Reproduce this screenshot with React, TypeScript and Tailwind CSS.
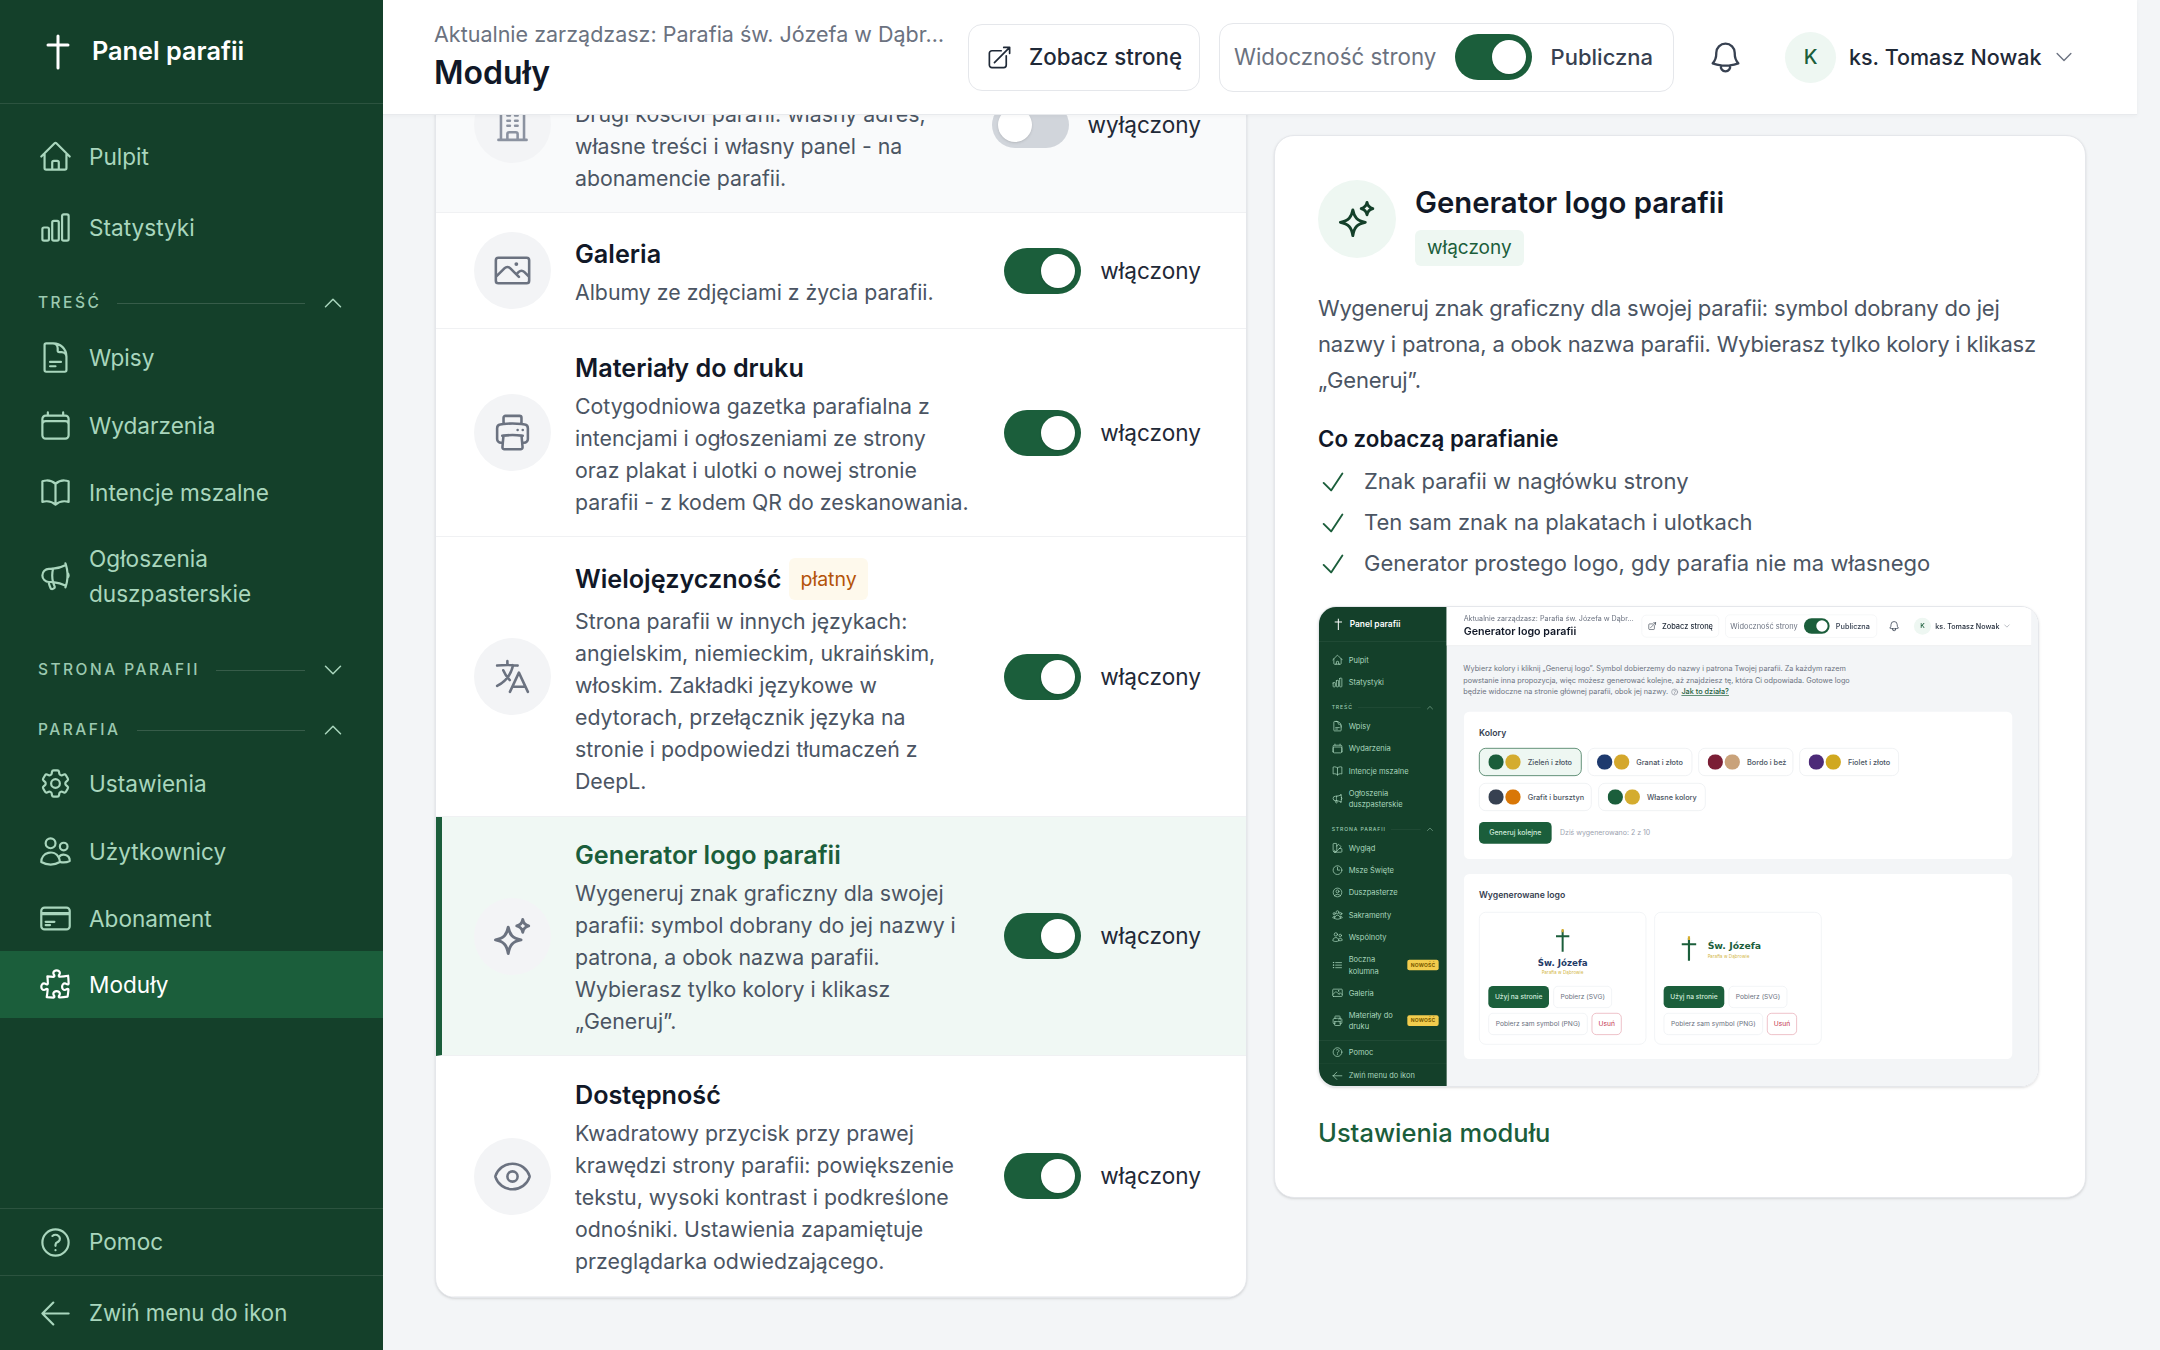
import React from 'react';
import {
  HiOutlineHome, HiOutlineChartBar, HiOutlineDocumentText, HiOutlineCalendar, HiOutlineBookOpen,
  HiOutlineMegaphone, HiOutlineCog6Tooth, HiOutlineUsers, HiOutlineCreditCard, HiOutlinePuzzlePiece,
  HiOutlineQuestionMarkCircle, HiOutlineArrowLeft, HiOutlineBell, HiOutlineArrowTopRightOnSquare,
  HiOutlineChevronDown, HiOutlineChevronUp, HiOutlineLanguage, HiOutlineEye, HiOutlinePhoto,
  HiOutlinePrinter, HiOutlineBuildingOffice, HiOutlineCheck, HiOutlineSwatch, HiOutlineClock,
  HiOutlineUserCircle, HiOutlineListBullet, HiOutlineUserGroup,
} from 'react-icons/hi2';

type IC = React.ComponentType<{ className?: string }>;

function Sparkle({ className }: { className?: string }) {
  return (
    <svg viewBox="0 0 24 24" fill="none" stroke="currentColor" strokeWidth="1.7" strokeLinejoin="round" className={className}>
      <path d="M9.5 6.5C10.3 11 12 13 17 14C12 15 10.3 17 9.5 22C8.7 17 7 15 2 14C7 13 8.7 11 9.5 6.5Z" />
      <path d="M18 2C18.4 4.3 19.2 5.2 21.5 5.8C19.2 6.4 18.4 7.3 18 9.5C17.6 7.3 16.8 6.4 14.5 5.8C16.8 5.2 17.6 4.3 18 2Z" />
    </svg>
  );
}

function Cross({ className }: { className?: string }) {
  return (
    <svg viewBox="0 0 24 36" fill="none" stroke="currentColor" strokeWidth="3" strokeLinecap="round" className={className}>
      <path d="M12 2V34M2 11H22" />
    </svg>
  );
}

function Toggle({ on }: { on: boolean }) {
  return (
    <div className={`flex h-[46px] w-[77px] shrink-0 items-center rounded-full px-[6px] ${on ? 'justify-end bg-[#1b5e3b]' : 'justify-start bg-[#d1d5db]'}`}>
      <div className="h-[34px] w-[34px] rounded-full bg-white shadow-sm" />
    </div>
  );
}

function NavItem({ icon: Icon, label, h = 'h-[67px]', active, badge, lines }: { icon: IC; label?: string; h?: string; active?: boolean; badge?: boolean; lines?: string[] }) {
  return (
    <div className={`flex shrink-0 items-center gap-[16px] pl-[38px] pr-[24px] ${h} ${active ? 'bg-[#1b5e3b] text-white' : 'text-[#a9d6bd]'}`}>
      <Icon className="h-[35px] w-[35px] shrink-0" />
      <div className="flex-1 text-[22.6px] leading-[35px]">
        {lines ? lines.map((l) => <div key={l}>{l}</div>) : label}
      </div>
      {badge && <div className="rounded-[6px] bg-[#f2cc4d] px-[10px] py-[6px] text-[15px] font-bold leading-[20px] tracking-[0.04em] text-[#7a5a00]">NOWOŚĆ</div>}
    </div>
  );
}

function SectionHead({ label, open, cls }: { label: string; open?: boolean; cls: string }) {
  const Ch = open ? HiOutlineChevronUp : HiOutlineChevronDown;
  return (
    <div className={`flex h-[24px] shrink-0 items-center pl-[38px] pr-[38px] ${cls}`}>
      <span className="whitespace-nowrap text-[15.5px] font-medium tracking-[0.16em] text-[#9cc9b0]">{label}</span>
      <div className="mx-[16px] h-px flex-1 bg-white/15" />
      <Ch className="h-[24px] w-[24px] text-[#a9d6bd]" />
    </div>
  );
}

function SidebarShell({ children }: { children: React.ReactNode }) {
  return (
    <aside className="flex h-full w-[383px] shrink-0 flex-col bg-[#14402a]">
      <div className="flex h-[104px] shrink-0 items-center gap-[22px] border-b border-white/10 pl-[46px]">
        <Cross className="h-[36px] w-[24px] text-white" />
        <span className="pb-[1px] text-[25.3px] font-semibold text-white">Panel parafii</span>
      </div>
      <div className="flex flex-1 flex-col overflow-hidden">{children}</div>
      <div className="flex h-[67px] shrink-0 items-center gap-[16px] border-t border-white/10 pl-[38px] text-[#a9d6bd]">
        <HiOutlineQuestionMarkCircle className="h-[35px] w-[35px]" />
        <span className="text-[22.6px]">Pomoc</span>
      </div>
      <div className="flex h-[75px] shrink-0 items-center gap-[16px] border-t border-white/10 pl-[38px] text-[#a9d6bd]">
        <HiOutlineArrowLeft className="h-[35px] w-[35px]" />
        <span className="text-[22.2px]">Zwiń menu do ikon</span>
      </div>
    </aside>
  );
}

function TopBar({ title }: { title: string }) {
  return (
    <header className="relative z-10 flex h-[115px] w-[1754px] shrink-0 items-center border-b border-[#e8eaed] bg-white pl-[51px] shadow-[0_1px_4px_rgba(0,0,0,0.04)]">
      <div className="w-[534px] shrink-0 pb-[3px]">
        <div className="whitespace-nowrap text-[21.5px] leading-[32px] text-[#6b7280]">Aktualnie zarządzasz: Parafia św. Józefa w Dąbr…</div>
        <div className="mt-[3px] whitespace-nowrap text-[32px] font-semibold leading-[40px] text-[#111827]">{title}</div>
      </div>
      <div className="flex h-[67px] w-[232px] shrink-0 items-center justify-center gap-[16px] rounded-[14px] border-[1.5px] border-[#e5e7eb] text-[22.3px] font-medium text-[#1f2937]">
        <HiOutlineArrowTopRightOnSquare className="h-[27px] w-[27px]" />
        Zobacz stronę
      </div>
      <div className="ml-[19px] flex h-[69px] w-[455px] shrink-0 items-center rounded-[14px] border-[1.5px] border-[#e5e7eb] pl-[14px] pr-[20px]">
        <span className="flex-1 text-[22.3px] text-[#6b7280]">Widoczność strony</span>
        <Toggle on />
        <span className="ml-[19px] text-[22px] font-medium text-[#374151]">Publiczna</span>
      </div>
      <HiOutlineBell className="ml-[33px] h-[37px] w-[37px] shrink-0 text-[#374151]" />
      <div className="ml-[41px] flex h-[51px] w-[51px] shrink-0 items-center justify-center rounded-full bg-[#eef7f2] text-[20px] font-medium text-[#1b5e3b]">K</div>
      <span className="ml-[13px] w-[190px] shrink-0 whitespace-nowrap text-[21.5px] font-medium text-[#1f2937]">ks. Tomasz Nowak</span>
      <HiOutlineChevronDown className="ml-[14px] h-[22px] w-[22px] shrink-0 text-[#6b7280]" />
    </header>
  );
}

function Row({ icon: Icon, title, lines, on, h, badge, selected, off }: { icon: IC; title: string; lines: string[]; on: boolean; h: string; badge?: string; selected?: boolean; off?: boolean }) {
  return (
    <div className={`flex ${h} items-center border-b border-[#f0f1f3] pr-[45px] ${selected ? 'border-l-[6px] border-l-[#1b5e3b] bg-[#f0f8f4] pl-[32px]' : off ? 'bg-[#f9fafb] pl-[38px]' : 'pl-[38px]'}`}>
      <div className="flex h-[77px] w-[77px] shrink-0 items-center justify-center rounded-full bg-[#f3f4f6]">
        <Icon className={`h-[41px] w-[41px] ${off ? 'text-[#8b92a0]' : 'text-[#6b7280]'}`} />
      </div>
      <div className={`ml-[24px] flex-1 ${badge ? '' : 'pt-[3px]'}`}>
        <div className={`flex items-center gap-[8px] ${badge ? 'mb-[4px] h-[44px]' : 'mb-[5px] h-[34px]'}`}>
          <span className={`whitespace-nowrap text-[25.2px] font-semibold leading-[34px] ${selected ? 'text-[#1b5e3b]' : 'text-[#111827]'}`}>{title}</span>
          {badge && <span className="rounded-[6px] bg-[#fef9ec] px-[11px] py-[6px] text-[19.5px] leading-[30px] text-[#b45309]">{badge}</span>}
        </div>
        <div className="text-[21.3px] leading-[32px] text-[#4b5563]">
          {lines.map((l) => <div key={l} className="whitespace-nowrap">{l}</div>)}
        </div>
      </div>
      <div className="flex items-center gap-[19px]">
        <Toggle on={on} />
        <span className="text-[22.6px] text-[#1f2937]">{on ? 'włączony' : 'wyłączony'}</span>
      </div>
    </div>
  );
}

function Chip({ a, b, label, w, selected }: { a: string; b: string; label: string; w: string; selected?: boolean }) {
  return (
    <div className={`flex h-[84px] ${w} items-center gap-[6px] rounded-[20px] border-2 pl-[26px] ${selected ? 'border-[#1b5e3b] bg-[#eef7f2]' : 'border-[#e9ebee] bg-white'}`}>
      <svg viewBox="0 0 100 46" className="h-[46px] w-[100px]">
        <circle cx="23" cy="23" r="23" fill={a} />
        <circle cx="74" cy="23" r="23" fill={b} />
      </svg>
      <span className="ml-[12px] whitespace-nowrap text-[22px] font-medium text-[#4b5563]">{label}</span>
    </div>
  );
}

function LogoMark({ className }: { className?: string }) {
  return (
    <svg viewBox="0 0 24 36" fill="none" strokeWidth="3" className={className}>
      <path d="M12 2V34M2 11H22" stroke="#1b5e3b" />
      <path d="M12 0V5" stroke="#d4ac2f" />
    </svg>
  );
}

function LogoCard({ horizontal }: { horizontal?: boolean }) {
  return (
    <div className="flex h-[398px] w-[502px] shrink-0 flex-col rounded-[20px] border-2 border-[#eceef1] bg-white px-[26px]">
      {horizontal ? (
        <div className="flex h-[220px] shrink-0 items-center gap-[30px] pl-[50px]">
          <LogoMark className="h-[80px] w-[52px]" />
          <div>
            <div className="whitespace-nowrap font-['DejaVu_Sans'] text-[28px] font-bold text-[#1b5e3b]">Św. Józefa</div>
            <div className="whitespace-nowrap font-['DejaVu_Sans'] text-[13px] text-[#d4b84a]">Parafia w Dąbrowie</div>
          </div>
        </div>
      ) : (
        <div className="flex h-[220px] shrink-0 flex-col items-center justify-center pt-[16px]">
          <LogoMark className="h-[76px] w-[48px]" />
          <div className="mt-[8px] whitespace-nowrap font-['DejaVu_Sans'] text-[26px] font-bold text-[#243a66]">Św. Józefa</div>
          <div className="whitespace-nowrap font-['DejaVu_Sans'] text-[13px] text-[#d4b84a]">Parafia w Dąbrowie</div>
        </div>
      )}
      <div className="flex gap-[13px]">
        <div className="flex h-[66px] w-[182px] items-center justify-center rounded-[14px] bg-[#1b5e3b] text-[20px] font-medium text-[#cfe9da]">Użyj na stronie</div>
        <div className="flex h-[66px] w-[176px] items-center justify-center rounded-[14px] border-2 border-[#eceef1] text-[20px] text-[#6b7280]">Pobierz (SVG)</div>
      </div>
      <div className="mt-[15px] flex gap-[12px]">
        <div className="flex h-[66px] w-[298px] items-center justify-center rounded-[14px] border-2 border-[#eceef1] text-[20px] text-[#6b7280]">Pobierz sam symbol (PNG)</div>
        <div className="flex h-[66px] w-[90px] items-center justify-center rounded-[14px] border-2 border-[#e6a3ad] text-[20px] text-[#c2334d]">Usuń</div>
      </div>
    </div>
  );
}

function MiniScreen() {
  return (
    <div className="flex h-[1443px] w-[2160px] origin-top-left scale-[0.3333] bg-[#f3f5f7]">
      <SidebarShell>
        <NavItem icon={HiOutlineHome} label="Pulpit" h="h-[68px] mt-[20px]" />
        <NavItem icon={HiOutlineChartBar} label="Statystyki" h="h-[68px]" />
        <SectionHead label="TREŚĆ" open cls="mt-[30px]" />
        <NavItem icon={HiOutlineDocumentText} label="Wpisy" h="h-[67px] mt-[10px]" />
        <NavItem icon={HiOutlineCalendar} label="Wydarzenia" />
        <NavItem icon={HiOutlineBookOpen} label="Intencje mszalne" />
        <NavItem icon={HiOutlineMegaphone} lines={['Ogłoszenia', 'duszpasterskie']} h="h-[100px]" />
        <SectionHead label="STRONA PARAFII" open cls="mt-[30px]" />
        <NavItem icon={HiOutlineSwatch} label="Wygląd" h="h-[67px] mt-[10px]" />
        <NavItem icon={HiOutlineClock} label="Msze Święte" />
        <NavItem icon={HiOutlineUserCircle} label="Duszpasterze" />
        <NavItem icon={HiOutlineUserGroup} label="Sakramenty" />
        <NavItem icon={HiOutlineUsers} label="Wspólnoty" />
        <NavItem icon={HiOutlineListBullet} lines={['Boczna', 'kolumna']} h="h-[100px]" badge />
        <NavItem icon={HiOutlinePhoto} label="Galeria" />
        <NavItem icon={HiOutlinePrinter} lines={['Materiały do', 'druku']} h="h-[100px]" badge />
      </SidebarShell>
      <div className="flex flex-1 flex-col">
        <TopBar title="Generator logo parafii" />
        <div className="pl-[50px] pt-[52px] text-[21.9px] leading-[35px] text-[#6b7280]">
          <div>Wybierz kolory i kliknij „Generuj logo”. Symbol dobierzemy do nazwy i patrona Twojej parafii. Za każdym razem</div>
          <div>powstanie inna propozycja, więc możesz generować kolejne, aż znajdziesz tę, która Ci odpowiada. Gotowe logo</div>
          <div className="flex items-center gap-[8px]">będzie widoczne na stronie głównej parafii, obok jej nazwy. <HiOutlineQuestionMarkCircle className="h-[24px] w-[24px]" /><span className="font-medium text-[#1b5e3b] underline">Jak to działa?</span></div>
        </div>
        <section className="ml-[52px] mt-[42px] h-[442px] w-[1645px] rounded-[16px] bg-white pl-[45px] pt-[44px]">
          <div className="text-[26px] font-semibold text-[#374151]">Kolory</div>
          <div className="mt-[26px] flex gap-[18px]">
            <Chip a="#1b5e3b" b="#d4ac2f" label="Zieleń i złoto" w="w-[308px]" selected />
            <Chip a="#1e3a6e" b="#d4a72c" label="Granat i złoto" w="w-[314px]" />
            <Chip a="#7b1e35" b="#c9a27a" label="Bordo i beż" w="w-[285px]" />
            <Chip a="#4c2a78" b="#d0a81f" label="Fiolet i złoto" w="w-[299px]" />
          </div>
          <div className="mt-[21px] flex gap-[20px]">
            <Chip a="#374151" b="#d97706" label="Grafit i bursztyn" w="w-[338px]" />
            <Chip a="#1b5e3b" b="#d4ac2f" label="Własne kolory" w="w-[322px]" />
          </div>
          <div className="mt-[33px] flex items-center gap-[25px]">
            <div className="flex h-[65px] w-[218px] items-center justify-center rounded-[14px] bg-[#1b5e3b] text-[21px] font-medium text-[#cfe9da]">Generuj kolejne</div>
            <span className="text-[21px] text-[#9ca3af]">Dziś wygenerowano: 2 z 10</span>
          </div>
        </section>
        <section className="ml-[52px] mt-[45px] h-[555px] w-[1645px] rounded-[16px] bg-white pl-[45px] pt-[44px]">
          <div className="text-[26px] font-semibold text-[#374151]">Wygenerowane logo</div>
          <div className="mt-[31px] flex gap-[24px]">
            <LogoCard />
            <LogoCard horizontal />
          </div>
        </section>
      </div>
    </div>
  );
}

export default function App() {
  return (
    <div className="flex h-[1350px] w-[2160px] overflow-hidden bg-[#f3f5f7] font-['Inter',sans-serif]">
      <SidebarShell>
        <NavItem icon={HiOutlineHome} label="Pulpit" h="h-[68px] mt-[18px]" />
        <NavItem icon={HiOutlineChartBar} label="Statystyki" h="h-[68px] mt-[3px]" />
        <SectionHead label="TREŚĆ" open cls="mt-[30px]" />
        <NavItem icon={HiOutlineDocumentText} label="Wpisy" h="h-[68px] mt-[8px]" />
        <NavItem icon={HiOutlineCalendar} label="Wydarzenia" h="h-[68px]" />
        <NavItem icon={HiOutlineBookOpen} label="Intencje mszalne" h="h-[66px]" />
        <NavItem icon={HiOutlineMegaphone} lines={['Ogłoszenia', 'duszpasterskie']} h="h-[102px]" />
        <SectionHead label="STRONA PARAFII" cls="mt-[31px]" />
        <SectionHead label="PARAFIA" open cls="mt-[36px]" />
        <NavItem icon={HiOutlineCog6Tooth} label="Ustawienia" h="h-[68px] mt-[7px]" />
        <NavItem icon={HiOutlineUsers} label="Użytkownicy" h="h-[68px]" />
        <NavItem icon={HiOutlineCreditCard} label="Abonament" h="h-[66px]" />
        <NavItem icon={HiOutlinePuzzlePiece} label="Moduły" active />
      </SidebarShell>

      <main className="flex h-full flex-1 flex-col overflow-hidden">
        <TopBar title="Moduły" />
        <div className="flex items-start gap-[27px] pl-[52px]">
          <div className="mt-[-79px] w-[812px] shrink-0 overflow-hidden rounded-[20px] border border-[#e5e7eb] bg-white shadow-sm">
            <Row icon={HiOutlineBuildingOffice} title="Kościół filialny" off on={false} h="h-[176px]" lines={['Drugi kościół parafii: własny adres,', 'własne treści i własny panel - na', 'abonamencie parafii.']} />
            <Row icon={HiOutlinePhoto} title="Galeria" on h="h-[116px]" lines={['Albumy ze zdjęciami z życia parafii.']} />
            <Row icon={HiOutlinePrinter} title="Materiały do druku" on h="h-[208px]" lines={['Cotygodniowa gazetka parafialna z', 'intencjami i ogłoszeniami ze strony', 'oraz plakat i ulotki o nowej stronie', 'parafii - z kodem QR do zeskanowania.']} />
            <Row icon={HiOutlineLanguage} title="Wielojęzyczność" badge="płatny" on h="h-[280px]" lines={['Strona parafii w innych językach:', 'angielskim, niemieckim, ukraińskim,', 'włoskim. Zakładki językowe w', 'edytorach, przełącznik języka na', 'stronie i podpowiedzi tłumaczeń z', 'DeepL.']} />
            <Row icon={Sparkle} title="Generator logo parafii" selected on h="h-[239px]" lines={['Wygeneruj znak graficzny dla swojej', 'parafii: symbol dobrany do jej nazwy i', 'patrona, a obok nazwa parafii.', 'Wybierasz tylko kolory i klikasz', '„Generuj”.']} />
            <Row icon={HiOutlineEye} title="Dostępność" on h="h-[241px]" lines={['Kwadratowy przycisk przy prawej', 'krawędzi strony parafii: powiększenie', 'tekstu, wysoki kontrast i podkreślone', 'odnośniki. Ustawienia zapamiętuje', 'przeglądarka odwiedzającego.']} />
          </div>

          <div className="mt-[20px] h-[1063px] w-[812px] shrink-0 rounded-[20px] border border-[#e5e7eb] bg-white pl-[43px] pt-[44px] shadow-sm">
            <div className="flex gap-[19px]">
              <div className="flex h-[78px] w-[78px] shrink-0 items-center justify-center rounded-full bg-[#eef7f2]">
                <Sparkle className="h-[40px] w-[40px] text-[#14402a]" />
              </div>
              <div>
                <div className="text-[29.3px] font-semibold leading-[46px] text-[#111827]">Generator logo parafii</div>
                <span className="mt-[4px] inline-block rounded-[6px] bg-[#eef7f2] px-[12px] py-[2px] text-[19px] leading-[32px] text-[#1b5e3b]">włączony</span>
              </div>
            </div>
            <div className="mt-[24px] whitespace-nowrap text-[22px] leading-[36px] tracking-[-0.2px] text-[#4b5563]">
              <div>Wygeneruj znak graficzny dla swojej parafii: symbol dobrany do jej</div>
              <div>nazwy i patrona, a obok nazwa parafii. Wybierasz tylko kolory i klikasz</div>
              <div>„Generuj”.</div>
            </div>
            <div className="mt-[23px] text-[22.3px] font-semibold leading-[36px] text-[#111827]">Co zobaczą parafianie</div>
            <div className="mt-[4px] text-[22px] text-[#4b5563]">
              {['Znak parafii w nagłówku strony', 'Ten sam znak na plakatach i ulotkach', 'Generator prostego logo, gdy parafia nie ma własnego'].map((t) => (
                <div key={t} className="flex h-[41px] items-center gap-[16px]">
                  <HiOutlineCheck className="h-[30px] w-[30px] shrink-0 text-[#1b5e3b]" />
                  {t}
                </div>
              ))}
            </div>
            <div className="mt-[22px] h-[481px] w-[721px] overflow-hidden rounded-[18px] border border-[#e5e7eb] shadow-sm">
              <div className="blur-[0.35px]"><MiniScreen /></div>
            </div>
            <div className="mt-[27px] text-[25.5px] font-medium text-[#1b5e3b]">Ustawienia modułu</div>
          </div>
        </div>
      </main>
    </div>
  );
}
